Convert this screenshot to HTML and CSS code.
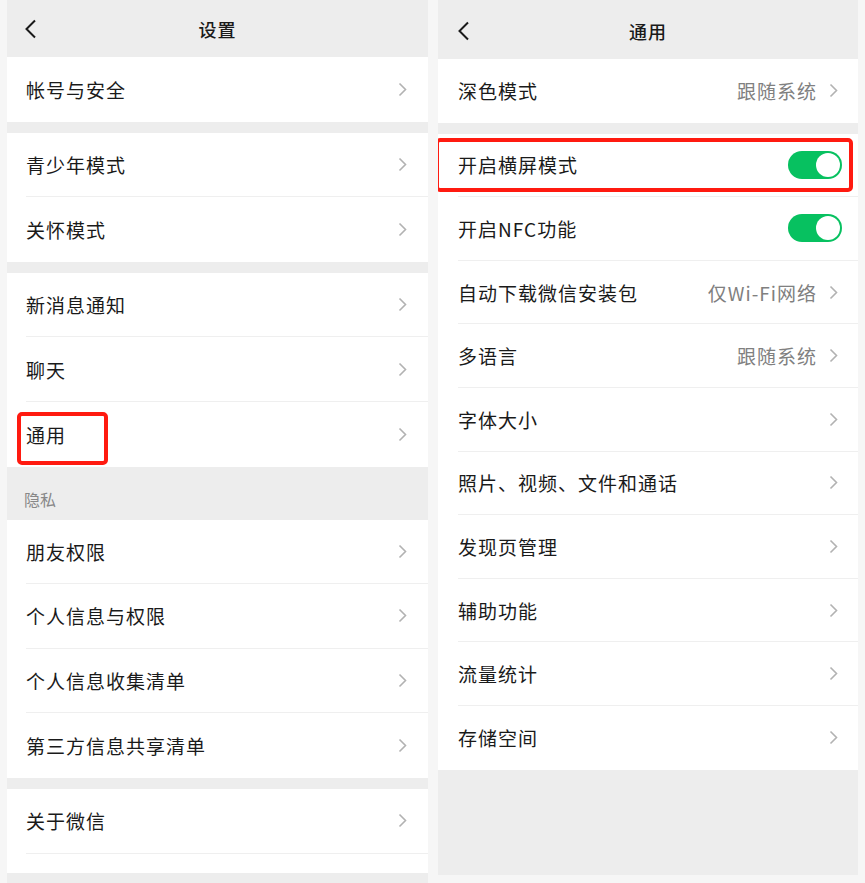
FILE: index.html
```html
<!DOCTYPE html>
<html lang="zh-CN">
<head>
<meta charset="UTF-8">
<meta name="viewport" content="width=device-width, initial-scale=1.0">
<title>设置 / 通用</title>
<link rel="stylesheet" href="styles.css">
</head>
<body>

<div class="screens">
    <!-- 设置 -->
    <div class="panel panel-left">
        <div class="header header-left">
            <span class="back">
                <svg width="13" height="20" viewBox="0 0 13 20"><polyline points="11,1.5 2.5,10 11,18.5" fill="none" stroke="#1a1a1a" stroke-width="2"/></svg>
            </span>
            <span class="title">设置</span>
            <span></span>
        </div>

        <div class="group">
            <div class="row"><div class="row-inner"><span class="label">帐号与安全</span><span class="chevron"><svg width="9" height="15" viewBox="0 0 9 15"><polyline points="1.5,1.5 7.5,7.5 1.5,13.5" fill="none" stroke="#b2b2b2" stroke-width="1.6"/></svg></span></div></div>
        </div>

        <div class="group">
            <div class="row"><div class="row-inner"><span class="label">青少年模式</span><span class="chevron"><svg width="9" height="15" viewBox="0 0 9 15"><polyline points="1.5,1.5 7.5,7.5 1.5,13.5" fill="none" stroke="#b2b2b2" stroke-width="1.6"/></svg></span></div></div>
            <div class="row"><div class="row-inner"><span class="label">关怀模式</span><span class="chevron"><svg width="9" height="15" viewBox="0 0 9 15"><polyline points="1.5,1.5 7.5,7.5 1.5,13.5" fill="none" stroke="#b2b2b2" stroke-width="1.6"/></svg></span></div></div>
        </div>

        <div class="group">
            <div class="row"><div class="row-inner"><span class="label">新消息通知</span><span class="chevron"><svg width="9" height="15" viewBox="0 0 9 15"><polyline points="1.5,1.5 7.5,7.5 1.5,13.5" fill="none" stroke="#b2b2b2" stroke-width="1.6"/></svg></span></div></div>
            <div class="row"><div class="row-inner"><span class="label">聊天</span><span class="chevron"><svg width="9" height="15" viewBox="0 0 9 15"><polyline points="1.5,1.5 7.5,7.5 1.5,13.5" fill="none" stroke="#b2b2b2" stroke-width="1.6"/></svg></span></div></div>
            <div class="row">
                <div class="row-inner"><span class="label">通用</span><span class="chevron"><svg width="9" height="15" viewBox="0 0 9 15"><polyline points="1.5,1.5 7.5,7.5 1.5,13.5" fill="none" stroke="#b2b2b2" stroke-width="1.6"/></svg></span></div>
                <div class="highlight highlight-general"></div>
            </div>
        </div>

        <div class="section-title">隐私</div>

        <div class="group">
            <div class="row"><div class="row-inner"><span class="label">朋友权限</span><span class="chevron"><svg width="9" height="15" viewBox="0 0 9 15"><polyline points="1.5,1.5 7.5,7.5 1.5,13.5" fill="none" stroke="#b2b2b2" stroke-width="1.6"/></svg></span></div></div>
            <div class="row"><div class="row-inner"><span class="label">个人信息与权限</span><span class="chevron"><svg width="9" height="15" viewBox="0 0 9 15"><polyline points="1.5,1.5 7.5,7.5 1.5,13.5" fill="none" stroke="#b2b2b2" stroke-width="1.6"/></svg></span></div></div>
            <div class="row"><div class="row-inner"><span class="label">个人信息收集清单</span><span class="chevron"><svg width="9" height="15" viewBox="0 0 9 15"><polyline points="1.5,1.5 7.5,7.5 1.5,13.5" fill="none" stroke="#b2b2b2" stroke-width="1.6"/></svg></span></div></div>
            <div class="row"><div class="row-inner"><span class="label">第三方信息共享清单</span><span class="chevron"><svg width="9" height="15" viewBox="0 0 9 15"><polyline points="1.5,1.5 7.5,7.5 1.5,13.5" fill="none" stroke="#b2b2b2" stroke-width="1.6"/></svg></span></div></div>
        </div>

        <div class="group">
            <div class="row"><div class="row-inner"><span class="label">关于微信</span><span class="chevron"><svg width="9" height="15" viewBox="0 0 9 15"><polyline points="1.5,1.5 7.5,7.5 1.5,13.5" fill="none" stroke="#b2b2b2" stroke-width="1.6"/></svg></span></div></div>
            <div class="row row-cut"><div class="row-inner"></div></div>
        </div>
    </div>

    <!-- 通用 -->
    <div class="panel panel-right">
        <div class="header header-right">
            <span class="back">
                <svg width="13" height="20" viewBox="0 0 13 20"><polyline points="11,1.5 2.5,10 11,18.5" fill="none" stroke="#1a1a1a" stroke-width="2"/></svg>
            </span>
            <span class="title">通用</span>
            <span></span>
        </div>

        <div class="group">
            <div class="row"><div class="row-inner"><span class="label">深色模式</span><span class="extra"><span class="value">跟随系统</span><span class="chevron"><svg width="9" height="15" viewBox="0 0 9 15"><polyline points="1.5,1.5 7.5,7.5 1.5,13.5" fill="none" stroke="#b2b2b2" stroke-width="1.6"/></svg></span></span></div></div>
        </div>

        <div class="group">
            <div class="row">
                <div class="row-inner"><span class="label">开启横屏模式</span><span class="switch"><span class="knob"></span></span></div>
                <div class="highlight highlight-landscape"></div>
            </div>
            <div class="row"><div class="row-inner"><span class="label">开启NFC功能</span><span class="switch"><span class="knob"></span></span></div></div>
            <div class="row"><div class="row-inner"><span class="label">自动下载微信安装包</span><span class="extra"><span class="value">仅Wi-Fi网络</span><span class="chevron"><svg width="9" height="15" viewBox="0 0 9 15"><polyline points="1.5,1.5 7.5,7.5 1.5,13.5" fill="none" stroke="#b2b2b2" stroke-width="1.6"/></svg></span></span></div></div>
            <div class="row"><div class="row-inner"><span class="label">多语言</span><span class="extra"><span class="value">跟随系统</span><span class="chevron"><svg width="9" height="15" viewBox="0 0 9 15"><polyline points="1.5,1.5 7.5,7.5 1.5,13.5" fill="none" stroke="#b2b2b2" stroke-width="1.6"/></svg></span></span></div></div>
            <div class="row"><div class="row-inner"><span class="label">字体大小</span><span class="chevron"><svg width="9" height="15" viewBox="0 0 9 15"><polyline points="1.5,1.5 7.5,7.5 1.5,13.5" fill="none" stroke="#b2b2b2" stroke-width="1.6"/></svg></span></div></div>
            <div class="row"><div class="row-inner"><span class="label">照片、视频、文件和通话</span><span class="chevron"><svg width="9" height="15" viewBox="0 0 9 15"><polyline points="1.5,1.5 7.5,7.5 1.5,13.5" fill="none" stroke="#b2b2b2" stroke-width="1.6"/></svg></span></div></div>
            <div class="row"><div class="row-inner"><span class="label">发现页管理</span><span class="chevron"><svg width="9" height="15" viewBox="0 0 9 15"><polyline points="1.5,1.5 7.5,7.5 1.5,13.5" fill="none" stroke="#b2b2b2" stroke-width="1.6"/></svg></span></div></div>
            <div class="row"><div class="row-inner"><span class="label">辅助功能</span><span class="chevron"><svg width="9" height="15" viewBox="0 0 9 15"><polyline points="1.5,1.5 7.5,7.5 1.5,13.5" fill="none" stroke="#b2b2b2" stroke-width="1.6"/></svg></span></div></div>
            <div class="row"><div class="row-inner"><span class="label">流量统计</span><span class="chevron"><svg width="9" height="15" viewBox="0 0 9 15"><polyline points="1.5,1.5 7.5,7.5 1.5,13.5" fill="none" stroke="#b2b2b2" stroke-width="1.6"/></svg></span></div></div>
            <div class="row"><div class="row-inner"><span class="label">存储空间</span><span class="chevron"><svg width="9" height="15" viewBox="0 0 9 15"><polyline points="1.5,1.5 7.5,7.5 1.5,13.5" fill="none" stroke="#b2b2b2" stroke-width="1.6"/></svg></span></div></div>
        </div>
    </div>
</div>

</body>
</html>
```

FILE: styles.css
```css
body {
    margin: 0;
    background-color: #f6f6f6;
    font-family: "Noto Sans CJK SC", sans-serif;
    color: #1a1a1a;
}

.screens {
    display: flex;
    gap: 10px;
    padding-left: 7px;
    height: 883px;
    overflow: hidden;
}

.panel {
    display: flex;
    flex-direction: column;
    background-color: #ededed;
    overflow: hidden;
}

.panel-left {
    width: 421px;
    height: 883px;
}

.panel-right {
    width: 420px;
    height: 875px;
}

.header {
    display: grid;
    grid-template-columns: 1fr auto 1fr;
    align-items: center;
    flex-shrink: 0;
}

.header-left {
    height: 57px;
}

.header-right {
    height: 59px;
    padding-top: 2px;
    box-sizing: border-box;
}

.back {
    display: flex;
    padding-left: 17px;
}

.header-right .back {
    padding-left: 19px;
}

.title {
    font-size: 18px;
    font-weight: 500;
    letter-spacing: 1px;
}

.group {
    background-color: #fff;
    flex-shrink: 0;
}

.group + .group {
    margin-top: 11px;
}

.row {
    position: relative;
    display: flex;
    height: 64.6px;
    padding-left: 19px;
}

.panel-right .row {
    height: 63.6px;
    padding-left: 20px;
}

.row-inner {
    flex: 1;
    display: flex;
    align-items: center;
    justify-content: space-between;
    padding-right: 21px;
    border-bottom: 1px solid #efefef;
}

.panel-right .row-inner {
    padding-right: 20px;
}

.row:last-child .row-inner {
    border-bottom: none;
}

.row-cut {
    height: 19px;
}

.label {
    font-size: 19px;
    letter-spacing: 1px;
}

.extra {
    display: flex;
    align-items: center;
    gap: 12px;
}

.value {
    font-size: 19px;
    letter-spacing: 1px;
    color: #808080;
}

.chevron {
    display: flex;
}

.section-title {
    display: flex;
    align-items: flex-end;
    height: 53px;
    padding: 0 0 9px 17px;
    box-sizing: border-box;
    font-size: 16px;
    color: #888;
    flex-shrink: 0;
}

.switch {
    display: flex;
    justify-content: flex-end;
    align-items: center;
    width: 54px;
    height: 28px;
    padding: 2px;
    box-sizing: border-box;
    margin-right: -4px;
    border-radius: 14px;
    background-color: #07c160;
}

.knob {
    width: 24px;
    height: 24px;
    border-radius: 50%;
    background-color: #fff;
}

.highlight {
    position: absolute;
    border: 4px solid #ff1a10;
    border-radius: 5px;
    pointer-events: none;
}

.highlight-general {
    left: 10px;
    top: 10px;
    width: 83px;
    height: 45px;
}

.highlight-landscape {
    left: -3px;
    top: 4px;
    width: 410px;
    height: 46px;
}
```
